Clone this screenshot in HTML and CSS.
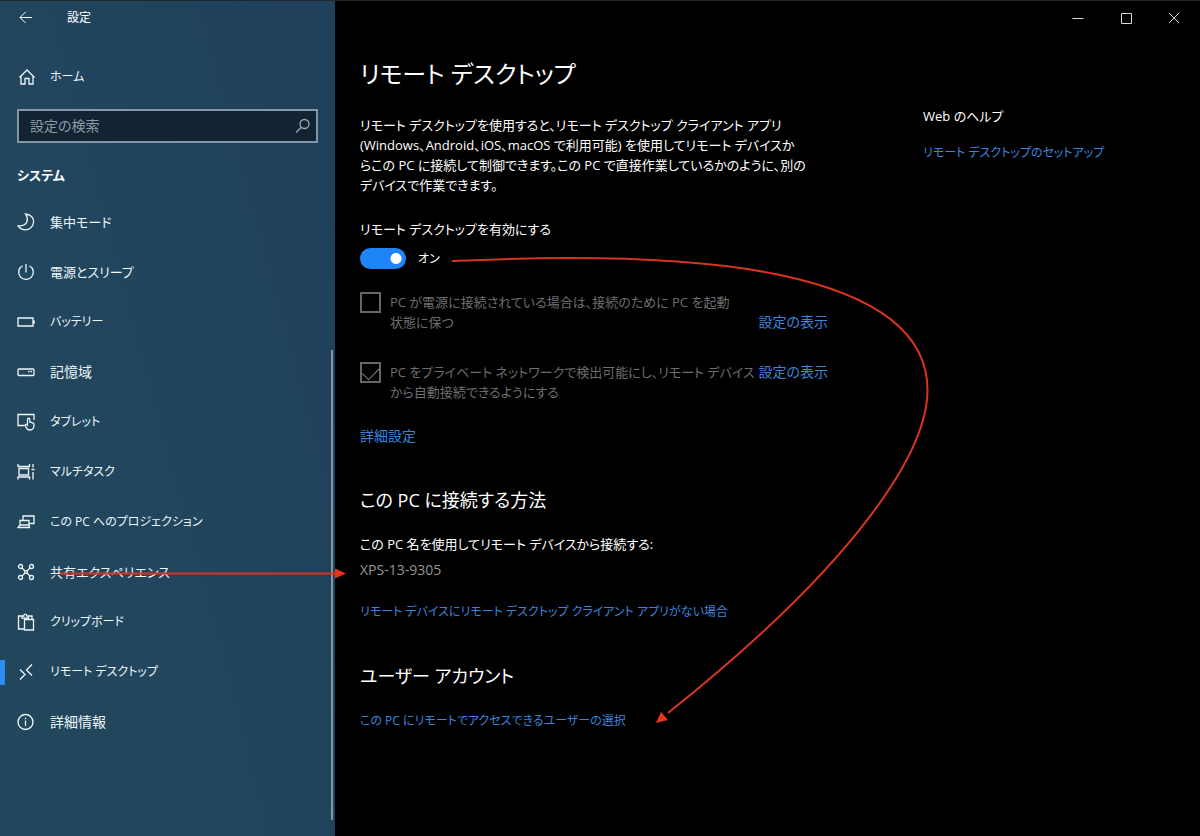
FILE: index.html
```html
<!DOCTYPE html>
<html lang="ja">
<head>
<meta charset="utf-8">
<title>設定</title>
<meta name="viewport" content="width=device-width, initial-scale=1">
<link rel="stylesheet" href="styles.css">
</head>
<body>
<div class="window">
  <aside class="sidebar">
    <header class="sidebar-top">
      <button class="back" type="button" aria-label="戻る">
        <svg class="icon thin" viewBox="0 0 18 18"><path d="M15 8.500H3M8.500 3 3 8.500l5.500 5.500"/></svg>
      </button>
      <span class="app-title">設定</span>
    </header>
    <a class="nav-link home kana" href="#">
      <svg class="icon" viewBox="0 0 18 18"><path d="M2.500 9.500 10 2l7.500 7.500M4 8.500V16h4v-5.500h4V16h4V8.500"/></svg>
      <span>ホーム</span>
    </a>
    <div class="search">
      <input class="search-input" type="text" placeholder="設定の検索" aria-label="設定の検索">
      <svg class="search-icon" viewBox="0 0 18 18"><circle cx="11.500" cy="7" r="4.500"/><path d="M8.300 10.200 3 15.500"/></svg>
    </div>
    <h2 class="group">システム</h2>
    <nav class="nav">
      <a class="nav-link" href="#">
        <svg class="icon" viewBox="0 0 18 18"><path d="M8.500 1C14 1.500 17 5 16.500 9.500 16 14.500 12 17 8 16.800 5 16.500 2.500 15 1.200 12.800 6 13 9 11.500 10 8.500 10.800 6 10.200 3.500 8.500 1Z"/></svg>
        <span>集中モード</span>
      </a>
      <a class="nav-link" href="#">
        <svg class="icon" viewBox="0 0 18 18"><path d="M9 1v8.500M5.500 2.800a7.300 7.300 0 1 0 7 0"/></svg>
        <span>電源とスリープ</span>
      </a>
      <a class="nav-link kana" href="#">
        <svg class="icon" viewBox="0 0 18 18"><path d="M1 5h15v8H1zM17.200 7.500v3"/></svg>
        <span>バッテリー</span>
      </a>
      <a class="nav-link kanji" href="#">
        <svg class="icon" viewBox="0 0 18 18"><rect x="1" y="6" width="16" height="6.500" rx="1"/><path d="M11 8.500h1.500M13.500 8.500H15"/></svg>
        <span>記憶域</span>
      </a>
      <a class="nav-link kana" href="#">
        <svg class="icon" viewBox="0 0 18 18"><path d="M7.500 12.500H1V1.500h16v5.500M10.500 12V6.300c0-1.400 2.300-1.400 2.300 0V9l3 .8c1 .3 1.200.8 1.200 1.700 0 3-1 5.500-4 5.500-2.200 0-3.700-1.500-4.700-4.500-.3-1.200 1.200-1.500 2.200-.5Z"/></svg>
        <span>タブレット</span>
      </a>
      <a class="nav-link kana" href="#">
        <svg class="icon" viewBox="0 0 18 18"><path d="M1 1v2.500h11.500V1M1 16.500V14h11.500v2.500M2 5.500h9.500V12H2zM16 1v3.500M16 9v7.500M14.500 6.500h3"/></svg>
        <span>マルチタスク</span>
      </a>
      <a class="nav-link kana" href="#">
        <svg class="icon" viewBox="0 0 18 18"><path d="M6 7.500V3h11v7.500h-5M3 7.500h9V12H3zM3 12l-2 2.500h11.500L12 12"/></svg>
        <span>この PC へのプロジェクション</span>
      </a>
      <a class="nav-link" href="#">
        <svg class="icon" viewBox="0 0 18 18"><circle cx="3.500" cy="3.500" r="2"/><circle cx="14.500" cy="3.500" r="2"/><circle cx="3.500" cy="14.500" r="2"/><circle cx="14.500" cy="14.500" r="2"/><circle cx="9" cy="9" r="1.300"/><path d="m5 5 3 3m2 2 3 3m0-8-3 3m-2 2-3 3"/></svg>
        <span>共有エクスペリエンス</span>
      </a>
      <a class="nav-link kana" href="#">
        <svg class="icon" viewBox="0 0 18 18"><path d="M7.500 16H1.500V3H5v2.200h6.500V3H15v3M5 3h1.800c0-2.600 3-2.600 3 0h1.700M7.500 6.500h9V17h-9z"/></svg>
        <span>クリップボード</span>
      </a>
      <a class="nav-link current kana" href="#" aria-current="page">
        <svg class="icon" viewBox="0 0 18 18"><path d="m3 6.500 5 5L3 16.500M15 1.500 9.500 7l5.500 5.500"/></svg>
        <span>リモート デスクトップ</span>
      </a>
      <a class="nav-link kanji" href="#">
        <svg class="icon" viewBox="0 0 18 18"><circle cx="8.500" cy="9" r="7.500"/><path d="M8.500 7.500V13M8.500 4.800v1.400"/></svg>
        <span>詳細情報</span>
      </a>
    </nav>
    <div class="scrollbar"></div>
  </aside>

  <div class="pane">
    <header class="caption">
      <button class="caption-button" type="button" aria-label="最小化"><svg viewBox="0 0 12 12"><path d="M.500 6.500h11"/></svg></button>
      <button class="caption-button" type="button" aria-label="最大化"><svg viewBox="0 0 12 12"><path d="M1.500 1.500h10v10h-10z"/></svg></button>
      <button class="caption-button" type="button" aria-label="閉じる"><svg viewBox="0 0 12 12"><path d="m1 1 10 10M11 1 1 11"/></svg></button>
    </header>
    <div class="columns">
      <main class="content">
        <h1 class="page-title">リモート デスクトップ</h1>
        <p class="intro">リモート デスクトップを使用すると、リモート デスクトップ クライアント アプリ<br>(Windows、Android、iOS、macOS で利用可能) を使用してリモート デバイスか<br>らこの PC に接続して制御できます。この PC で直接作業しているかのように、別の<br>デバイスで作業できます。</p>
        <div class="setting">
          <label class="setting-label" for="rdp">リモート デスクトップを有効にする</label>
          <div class="toggle-row">
            <input class="toggle" id="rdp" type="checkbox" role="switch" checked>
            <span class="kana">オン</span>
          </div>
        </div>
        <div class="option">
          <input class="check" id="awake" type="checkbox" disabled>
          <label class="option-label" for="awake">PC が電源に接続されている場合は、接続のために PC を起動<br>状態に保つ</label>
          <a class="link option-link kanji low" href="#">設定の表示</a>
        </div>
        <div class="option">
          <input class="check" id="discover" type="checkbox" checked disabled>
          <label class="option-label" for="discover">PC をプライベート ネットワークで検出可能にし、リモート デバイス<br>から自動接続できるようにする</label>
          <a class="link option-link kanji" href="#">設定の表示</a>
        </div>
        <a class="link advanced kanji" href="#">詳細設定</a>
        <section class="section">
          <h2 class="section-title">この PC に接続する方法</h2>
          <p class="text">この PC 名を使用してリモート デバイスから接続する:</p>
          <p class="pc-name">XPS-13-9305</p>
          <a class="link kana" href="#">リモート デバイスにリモート デスクトップ クライアント アプリがない場合</a>
        </section>
        <section class="section">
          <h2 class="section-title">ユーザー アカウント</h2>
          <a class="link kana" href="#">この PC にリモートでアクセスできるユーザーの選択</a>
        </section>
      </main>
      <aside class="help">
        <h2 class="help-title">Web のヘルプ</h2>
        <a class="link kana" href="#">リモート デスクトップのセットアップ</a>
      </aside>
    </div>
  </div>

  <svg class="notes" viewBox="0 0 1200 836" aria-hidden="true">
    <path class="note-line" d="M452 261C560 256 690 256 780 275C870 294 927.500 330 927.500 390C927.500 450 860 560 668 713"/>
    <path class="note-head" d="M656 723 661 712 668 720Z"/>
    <path class="note-line" d="M60 573.500H336"/>
    <path class="note-head" d="M346 573.500 335 568.500V578.500Z"/>
  </svg>
</div>
</body>
</html>
```
FILE: styles.css
```css
* {
  box-sizing: border-box;
}

body {
  margin: 0;
  background: #000;
  color: #fff;
  font-family: "Open Sans", "Noto Sans CJK JP", sans-serif;
  font-size: 13px;
  font-feature-settings: "palt";
  line-height: 20px;
}

h1, h2, p {
  margin: 0;
  font-weight: 400;
}

button {
  padding: 0;
  border: 0;
  background: none;
  color: inherit;
}

svg {
  fill: none;
  stroke: currentColor;
}

.kana {
  font-size: 12px;
}

.kanji {
  font-size: 14px;
}

.window {
  position: relative;
  display: flex;
  min-height: 100vh;
  border-top: 1px solid #24282b;
}

.sidebar {
  position: relative;
  flex: 0 0 335px;
  background: linear-gradient(75deg, #22485d, #21455d 50%, #1f3f5b);
}

.sidebar-top {
  display: flex;
  align-items: center;
  gap: 32px;
  height: 34px;
  padding-left: 17px;
}

.back,
.icon {
  display: block;
  width: 18px;
  height: 18px;
  flex: none;
}

.icon {
  stroke-width: 1.3;
}

.thin {
  stroke-width: 1;
}

.app-title {
  font-size: 12px;
}

.nav-link {
  display: flex;
  align-items: center;
  gap: 15px;
  height: 50px;
  padding-left: 17px;
  color: #eef6fa;
  text-decoration: none;
}

.home {
  margin-top: 17px;
}

.search {
  display: flex;
  align-items: center;
  height: 34px;
  margin: 7px 17px 0;
  padding: 0 5px 0 11px;
  border: 2px solid #8296a5;
  background: #122433;
  color: #9fabb4;
}

.search-input {
  flex: 1;
  min-width: 0;
  padding: 0;
  border: 0;
  outline: 0;
  background: none;
  color: inherit;
  font: inherit;
  font-size: 14px;
  font-feature-settings: inherit;
}

.search-input::placeholder {
  color: #8f9ba5;
}

.search-icon {
  width: 18px;
  height: 18px;
  stroke-width: 1.3;
}

.group {
  margin: 22px 0 12px 17px;
  font-size: 13px;
  font-weight: 700;
}

.current {
  background: linear-gradient(#2d8cf0, #2d8cf0) 0 50% / 5px 25px no-repeat;
}

.scrollbar {
  position: absolute;
  right: 2px;
  top: 349px;
  bottom: 16px;
  width: 2px;
  background: #8496a5;
}

.pane {
  flex: 1;
  min-width: 0;
}

.caption {
  display: flex;
  justify-content: flex-end;
  height: 34px;
  padding-right: 2px;
}

.caption-button {
  display: grid;
  place-items: center;
  width: 48px;
  color: #d8d8d8;
}

.caption-button svg {
  width: 12px;
  height: 12px;
}

.columns {
  display: flex;
  gap: 95px;
  padding: 19px 20px 20px 25px;
}

.content {
  flex: 0 1 468px;
}

.page-title {
  font-size: 24px;
  line-height: 40px;
}

.intro {
  margin-top: 21px;
  white-space: nowrap;
}

.setting {
  margin-top: 24px;
}

.setting-label {
  display: block;
}

.toggle-row {
  display: flex;
  align-items: center;
  gap: 12px;
  margin-top: 9px;
}

.toggle {
  appearance: none;
  width: 46px;
  height: 21px;
  margin: 0;
  border-radius: 11px;
  background: radial-gradient(circle at 36px 50%, #fff 5px, #0000 6px) #1f84f5;
}

.option {
  display: flex;
  align-items: flex-start;
  height: 40px;
  margin: 23px 0 30px;
}

.check {
  appearance: none;
  flex: none;
  width: 21px;
  height: 21px;
  margin: 0 9px 0 0;
  border: 2px solid #666;
}

.check:checked::before {
  content: "";
  display: block;
  width: 15px;
  height: 8px;
  margin: 3px 0 0 1px;
  border: solid #888;
  border-width: 0 0 1px 1px;
  transform: rotate(-45deg);
}

.option-label {
  color: #6e6e6e;
  white-space: nowrap;
}

.link {
  color: #3d84df;
  text-decoration: none;
  white-space: nowrap;
}

.option-link {
  margin-left: auto;
}

.low {
  align-self: flex-end;
}

.advanced {
  display: block;
  margin-top: -6px;
}

.section {
  margin-top: 40px;
}

.section-title {
  margin-bottom: 20px;
  font-size: 18px;
  line-height: 28px;
}

.pc-name {
  margin: 6px 0 21px;
  color: #969696;
  font-size: 14px;
}

.help {
  padding-top: 52px;
}

.help-title {
  margin-bottom: 16px;
  font-size: 13px;
}

.notes {
  position: absolute;
  top: -1px;
  left: 0;
  width: 1200px;
  height: 836px;
  pointer-events: none;
}

.note-line {
  stroke: #d93420;
  stroke-width: 2;
}

.note-head {
  fill: #e8341c;
  stroke: none;
}
```
